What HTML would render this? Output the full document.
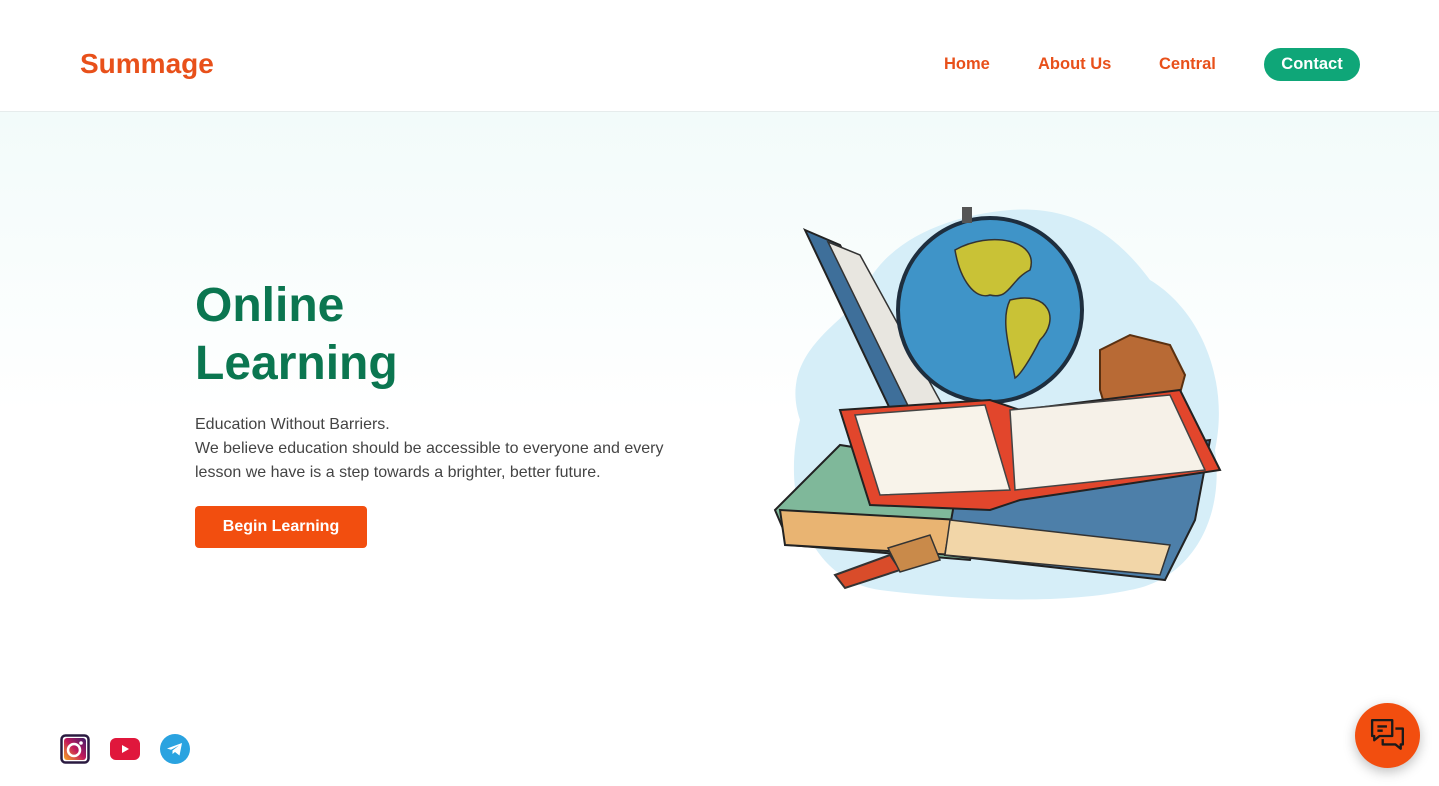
<!DOCTYPE html>
<html><head><meta charset="utf-8"><style>
*{margin:0;padding:0;box-sizing:border-box}
body{width:1439px;height:786px;overflow:hidden;font-family:"Liberation Sans",Arial,sans-serif;background:#fff;position:relative}
header{height:112px;border-bottom:1px solid #e6ecec;position:relative;background:#fff}
.logo{position:absolute;left:80px;top:48px;font-size:28px;font-weight:bold;color:#e8501a}
nav a{position:absolute;top:55px;font-size:16.5px;font-weight:bold;color:#e8501a;text-decoration:none}
.contact{position:absolute;left:1264px;top:48px;width:96px;height:33px;border-radius:17px;background:#0fa678;color:#fff;font-weight:bold;font-size:16.5px;text-align:center;line-height:33px}
.hero{position:absolute;top:112px;left:0;width:1439px;height:674px;background:linear-gradient(#f2fbfa 0,#fff 300px)}
h1{position:absolute;left:195px;top:277px;font-size:48px;line-height:58px;color:#0b7650;font-weight:bold}
p{position:absolute;left:195px;top:413px;font-size:16px;line-height:24px;color:#444}
.btn{position:absolute;left:195px;top:506px;width:172px;height:42px;background:#f24e0f;color:#fff;border-radius:4px;font-weight:bold;font-size:16px;text-align:center;line-height:42px}
.chat{position:absolute;left:1355px;top:703px;width:65px;height:65px;border-radius:50%;background:#f24e0f;box-shadow:0 4px 12px rgba(0,0,0,.25)}
</style></head><body>
<header><div class="logo">Summage</div>
<nav><a style="left:944px">Home</a><a style="left:1038px">About Us</a><a style="left:1159px">Central</a></nav>
<div class="contact">Contact</div></header>
<div class="hero"></div>
<h1>Online<br>Learning</h1>
<p>Education Without Barriers.<br>We believe education should be accessible to everyone and every<br>lesson we have is a step towards a brighter, better future.</p>
<div class="btn">Begin Learning</div>
<svg style="position:absolute;left:765px;top:200px" width="465" height="405" viewBox="765 200 465 405">
<path d="M800 420 C780 360 830 330 860 300 C880 240 950 215 1010 210 C1080 205 1120 240 1150 280 C1200 310 1230 380 1215 450 C1225 520 1190 580 1130 590 C1060 605 960 600 880 590 C810 580 780 500 800 420Z" fill="#d6eef8"/>
<path d="M805 230 L840 245 L935 420 L900 430Z" fill="#3e6f9a" stroke="#222" stroke-width="2"/>
<path d="M828 242 L860 255 L945 410 L915 420Z" fill="#e8e6e0" stroke="#333" stroke-width="1.5"/>
<circle cx="990" cy="310" r="92" fill="#3f94c8" stroke="#1e2e3e" stroke-width="4"/>
<path d="M955 250 C990 230 1040 240 1030 270 C1010 280 1010 300 990 295 C975 300 960 280 955 250Z M1010 300 C1050 290 1060 320 1040 340 C1030 360 1020 375 1015 378 C1010 350 1000 320 1010 300Z" fill="#c9c236" stroke="#333" stroke-width="1.5"/>
<rect x="962" y="207" width="10" height="16" fill="#555"/>
<path d="M1100 350 L1130 335 L1170 345 L1185 375 L1170 430 L1115 440 L1100 390Z" fill="#b86a35" stroke="#5a3010" stroke-width="2"/>
<path d="M775 510 L840 445 L1000 470 L970 560 L790 545Z" fill="#7fb89a" stroke="#222" stroke-width="2"/>
<path d="M780 510 L960 520 L955 555 L785 545Z" fill="#e9b472" stroke="#222" stroke-width="2"/>
<path d="M960 470 L1210 440 L1195 520 L1165 580 L945 555Z" fill="#4d7fa9" stroke="#222" stroke-width="2"/>
<path d="M950 520 L1170 545 L1160 575 L945 555Z" fill="#f2d6a8" stroke="#333" stroke-width="1.5"/>
<path d="M840 410 L990 400 L1020 410 L1180 390 L1220 470 L1020 500 L990 510 L870 505Z" fill="#e2462c" stroke="#222" stroke-width="2"/>
<path d="M855 415 L985 405 L1010 490 L880 495Z" fill="#f8f3ea" stroke="#444" stroke-width="1.5"/>
<path d="M1010 410 L1170 395 L1205 470 L1015 490Z" fill="#f6f1e8" stroke="#444" stroke-width="1.5"/>
<path d="M835 575 L890 555 L900 570 L845 588Z" fill="#d94c2a" stroke="#333" stroke-width="2"/>
<path d="M888 548 L930 535 L940 560 L900 572Z" fill="#c98a4a" stroke="#333" stroke-width="1.5"/>
</svg>
<svg style="position:absolute;left:60px;top:734px" width="30" height="30" viewBox="0 0 30 30"><defs><linearGradient id="ig" x1="0" y1="1" x2="1" y2="0"><stop offset="0" stop-color="#f9a825"/><stop offset=".5" stop-color="#c2185b"/><stop offset="1" stop-color="#3f1d6b"/></linearGradient></defs><rect x="1.5" y="1.5" width="27" height="27" rx="4" fill="none" stroke="#2a1a40" stroke-width="2.5"/><rect x="4" y="4" width="22" height="22" rx="3" fill="url(#ig)"/><circle cx="14" cy="16" r="6" fill="none" stroke="#fff" stroke-width="2.5"/><circle cx="21" cy="9" r="1.8" fill="#fff"/></svg>
<svg style="position:absolute;left:110px;top:738px" width="30" height="22" viewBox="0 0 30 22"><rect width="30" height="22" rx="6" fill="#e0173c"/><path d="M12 7 L19 11 L12 15Z" fill="#fff"/></svg>
<svg style="position:absolute;left:160px;top:734px" width="30" height="30" viewBox="0 0 30 30"><circle cx="15" cy="15" r="15" fill="#2aa3e0"/><path d="M7 14.5 L22 9 L19.5 21.5 L15 18 L12.5 20 L12.5 16.5 L19 11.5 L11 15.8Z" fill="#fff"/></svg>
<div class="chat"><svg style="position:absolute;left:15px;top:15px" width="36" height="36" viewBox="0 0 34 34" fill="none" stroke="#1a1a1a" stroke-width="2.2" stroke-linejoin="round"><path d="M2 2 H21 V17 H9 L4 21 V17 H2Z"/><path d="M7 8 H16 M7 12 H12"/><path d="M24 10 H31 V25 H29 V29 L24 25 H12 V20"/></svg></div>
</body></html>
